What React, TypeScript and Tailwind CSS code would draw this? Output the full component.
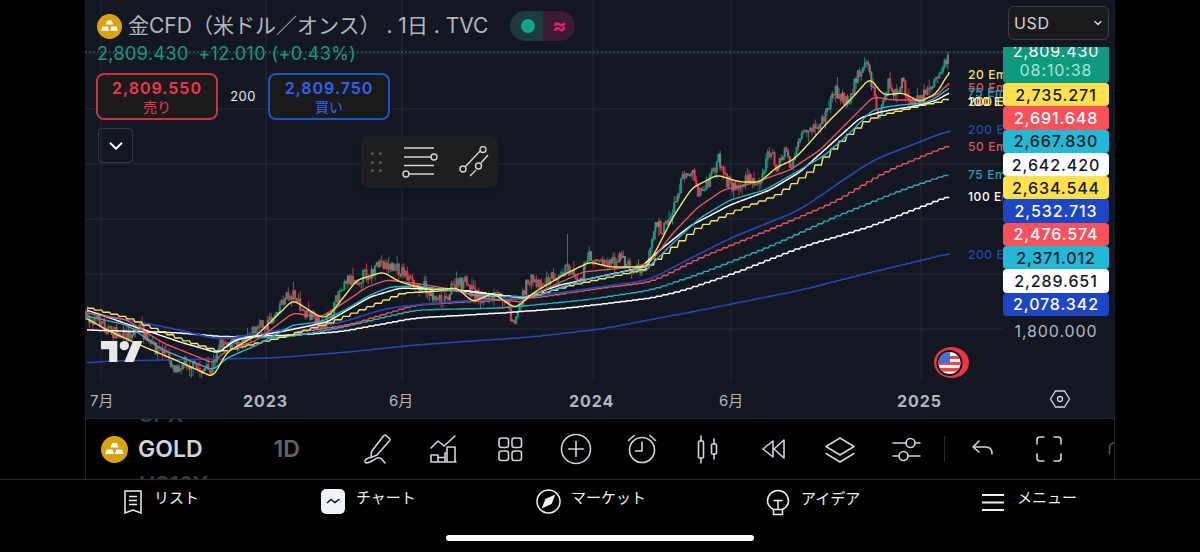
import { ChevronDown } from "lucide-react"

type Pt = [number, number]

// chart curves are kept in page pixels, the svg viewBox starts at the panel edge
const pricePts: Pt[] = [[86,318],[100,320],[110,332],[125,337],[140,326],[150,345],[165,352],[175,368],[185,360],[195,368],[212,372],[218,345],[226,340],[235,345],[245,335],[258,328],[270,322],[282,300],[295,293],[300,310],[312,318],[322,325],[332,315],[338,295],[345,278],[355,280],[365,275],[375,272],[380,262],[392,268],[405,272],[412,285],[422,285],[432,295],[445,298],[455,285],[465,283],[475,295],[490,298],[505,295],[512,318],[516,320],[522,295],[530,280],[545,283],[560,270],[570,270],[580,278],[590,255],[600,263],[620,258],[633,270],[647,265],[652,240],[655,223],[663,230],[673,210],[685,170],[693,173],[697,192],[707,187],[718,158],[723,178],[737,188],[748,180],[757,185],[770,150],[777,167],[787,150],[790,168],[800,140],[813,130],[823,120],[835,90],[847,103],[860,70],[866,63],[870,73],[875,100],[879,120],[885,97],[888,83],[893,97],[903,83],[910,107],[920,100],[927,90],[937,77],[949,55]]

const yellow20: Pt[] = [[86,318],[107,330],[140,345],[180,362],[213,377],[227,352],[257,335],[293,300],[320,317],[328,317],[357,280],[383,272],[400,282],[430,290],[457,288],[473,302],[493,293],[513,307],[517,307],[533,293],[567,273],[590,262],[610,267],[647,267],[660,243],[673,217],[692,188],[717,175],[740,182],[760,182],[777,167],[793,160],[803,150],[827,123],[853,97],[870,78],[877,87],[883,95],[903,93],[920,102],[937,93],[949,72]]
const red50: Pt[] = [[87,313],[127,320],[163,343],[213,363],[223,353],[257,340],[293,313],[320,317],[333,310],[367,287],[387,280],[413,283],[457,290],[480,298],[523,302],[533,295],[583,272],[633,267],[650,263],[673,233],[697,208],[723,190],[753,183],[790,170],[820,150],[850,120],[873,97],[893,100],[920,100],[937,95],[949,83]]
const cyan75: Pt[] = [[87,316],[127,325],[163,350],[213,370],[227,358],[257,345],[293,325],[320,322],[345,310],[370,295],[390,287],[415,286],[457,291],[480,296],[533,297],[583,280],[633,270],[650,266],[673,243],[700,218],[730,200],[765,190],[800,170],[825,155],[850,133],[870,112],[880,108],[900,105],[925,103],[937,97],[949,88]]
const white100: Pt[] = [[87,310],[130,325],[180,342],[218,353],[235,340],[290,330],[327,322],[370,297],[400,288],[457,290],[523,298],[560,285],[640,268],[660,250],[690,226],[730,205],[770,190],[800,172],[830,145],[860,118],[880,112],[920,105],[937,100],[949,93]]
const yellow200: Pt[] = [[87,308],[125,318],[180,340],[218,352],[280,337],[327,323],[400,293],[457,290],[523,298],[570,285],[640,270],[665,252],[695,228],[735,210],[775,195],[810,170],[840,140],[865,120],[880,115],[920,105],[937,102],[949,97]]

const blue200: Pt[] = [[87,312],[180,330],[220,340],[280,330],[340,323],[387,308],[447,302],[523,298],[600,287],[650,280],[683,262],[733,237],[800,210],[833,187],[873,160],[917,143],[950,130]]
const red200: Pt[] = [[297,332],[347,325],[413,305],[480,301],[533,298],[600,288],[650,282],[700,257],[767,230],[833,202],[883,172],[950,144]]
const cyan200: Pt[] = [[230,338],[287,337],[337,328],[413,310],[500,308],[583,300],[650,290],[700,273],[767,247],[833,217],[900,190],[950,173]]
const white200: Pt[] = [[87,330],[180,333],[223,337],[293,335],[337,332],[413,318],[500,313],[567,308],[650,298],[683,290],[733,273],[800,247],[867,227],[950,195]]
const blueLong: Pt[] = [[87,363],[107,361],[270,358],[347,352],[413,345],[530,337],[600,329],[700,310],[800,290],[867,273],[950,253]]

function yAt(pts: Pt[], x: number) {
  if (x <= pts[0][0]) return pts[0][1]
  for (let i = 1; i < pts.length; i++) {
    if (x <= pts[i][0]) {
      const [x0, y0] = pts[i - 1]
      const [x1, y1] = pts[i]
      return y0 + ((y1 - y0) * (x - x0)) / (x1 - x0)
    }
  }
  return pts[pts.length - 1][1]
}

function smoothAt(pts: Pt[], x: number, win: number) {
  const end = pts[pts.length - 1][0]
  let sum = 0
  let n = 0
  for (let d = -win; d <= win; d += 2) {
    sum += yAt(pts, Math.min(x + d, end))
    n++
  }
  return sum / n
}

function smoothLine(pts: Pt[], win = 4) {
  const out: string[] = []
  const end = pts[pts.length - 1][0]
  for (let x = pts[0][0]; x < end; x += 1.5) out.push(`${x},${smoothAt(pts, x, win).toFixed(1)}`)
  out.push(`${end},${pts[pts.length - 1][1]}`)
  return out.join(" ")
}

// higher timeframe EMAs come out as a staircase
function stairLine(pts: Pt[], step: number, win = 14) {
  const out: string[] = []
  const end = pts[pts.length - 1][0]
  for (let x = pts[0][0]; x < end; x += step) {
    const y = smoothAt(pts, x, win).toFixed(1)
    out.push(`${x},${y}`, `${Math.min(x + step - 1.6, end)},${y}`)
  }
  return out.join(" ")
}

function buildCandles() {
  let seed = 7
  const rnd = () => {
    seed = (seed * 16807) % 2147483647
    return seed / 2147483647
  }
  const paths = { green: "", red: "", grey: "" }
  let prev = pricePts[0][1]
  for (let x = 86; x < 949; x += 1.7) {
    const c = yAt(pricePts, x) + (rnd() - 0.5) * 13
    const top = Math.min(c, prev) - rnd() * rnd() * 10
    const bottom = Math.max(c, prev) + rnd() * rnd() * 10
    const r = rnd()
    const key = r < 0.2 ? "grey" : c < prev ? "green" : "red"
    const bodyTop = Math.min(c, prev)
    const bodyH = Math.max(Math.abs(c - prev), 1)
    paths[key] += `M${x.toFixed(1)} ${top.toFixed(1)}V${bottom.toFixed(1)}M${(x - 0.6).toFixed(1)} ${bodyTop.toFixed(1)}h1.2v${bodyH.toFixed(1)}h-1.2z`
    prev = c
  }
  paths.red += "M567.5 234V272"
  return paths
}

const candles = buildCandles()

const emaLabels = [
  { text: "20 Ema", y: 79, cls: "fill-[#f5e663]" },
  { text: "50 Ema", y: 92, cls: "fill-[#d9575b]" },
  { text: "75 Ema", y: 97, cls: "fill-[#2a9fb5]" },
  { text: "100 Ema", y: 106, cls: "fill-[#ffffff]" },
  { text: "200 Ema", y: 106, cls: "fill-[#f5e663]" },
  { text: "200 Ema", y: 134, cls: "fill-[#2447b3]" },
  { text: "50 Ema", y: 151, cls: "fill-[#d9575b]" },
  { text: "75 Ema", y: 179, cls: "fill-[#2a9fb5]" },
  { text: "100 Ema", y: 201, cls: "fill-[#ffffff]" },
  { text: "200 Ema", y: 259, cls: "fill-[#2447b3]" },
]

const priceTags = [
  { value: "2,735.271", cls: "bg-[#ffe14d] text-[#131722]" },
  { value: "2,691.648", cls: "bg-[#f9525a] text-white" },
  { value: "2,667.830", cls: "bg-[#22b8d6] text-[#131722]" },
  { value: "2,642.420", cls: "bg-white text-[#131722]" },
  { value: "2,634.544", cls: "bg-[#ffe14d] text-[#131722]" },
  { value: "2,532.713", cls: "bg-[#1d45c4] text-white" },
  { value: "2,476.574", cls: "bg-[#f9525a] text-white" },
  { value: "2,371.012", cls: "bg-[#22b8d6] text-[#131722]" },
  { value: "2,289.651", cls: "bg-white text-[#131722]" },
  { value: "2,078.342", cls: "bg-[#1d45c4] text-white" },
]

function GoldIcon({ size }: { size: number }) {
  return (
    <svg width={size} height={size} viewBox="0 0 26 26" className="shrink-0">
      <circle cx="13" cy="13" r="13" fill="#dca20c" />
      <path d="M10.6 6.8h4.8l1.4 4.2H9.2zM5.6 13h5.6l1.3 4.4H4.3zM14.8 13h5.6l1.3 4.4h-8.2z" fill="#fff" />
    </svg>
  )
}

function ChartCanvas() {
  const gridX = [101, 266, 402, 593, 731, 921]
  const gridY = [54, 109, 164, 219, 274, 329]
  return (
    <svg viewBox="85 0 918 381" width="918" height="381" className="block">
      {gridX.map((x) => <line key={x} x1={x} x2={x} y1="0" y2="381" stroke="#262a36" strokeWidth="1" />)}
      {gridY.map((y) => <line key={y} x1="85" x2="1003" y1={y} y2={y} stroke="#262a36" strokeWidth="1" />)}
      <path d={candles.green} stroke="#1b9d84" fill="#1b9d84" strokeWidth="0.8" />
      <path d={candles.red} stroke="#ee3a4a" fill="#ee3a4a" strokeWidth="0.8" />
      <path d={candles.grey} stroke="#857f7c" fill="#857f7c" strokeWidth="0.8" />
      <g fill="none" strokeLinejoin="round">
        <polyline points={stairLine(blueLong, 5)} stroke="#2447b3" strokeWidth="1.5" />
        <polyline points={stairLine(white200, 6)} stroke="#ffffff" strokeWidth="1.5" />
        <polyline points={stairLine(cyan200, 6)} stroke="#2aa9b8" strokeWidth="1.4" />
        <polyline points={stairLine(red200, 6)} stroke="#e3565a" strokeWidth="1.4" />
        <polyline points={smoothLine(blue200, 14)} stroke="#2447b3" strokeWidth="1.7" />
        <polyline points={stairLine(yellow200, 8, 4)} stroke="#f5e663" strokeWidth="1.4" />
        <polyline points={smoothLine(white100)} stroke="#ffffff" strokeWidth="1.5" />
        <polyline points={smoothLine(cyan75)} stroke="#2ab4cf" strokeWidth="1.4" />
        <polyline points={smoothLine(red50)} stroke="#e3565a" strokeWidth="1.4" />
        <polyline points={smoothLine(yellow20)} stroke="#f5e663" strokeWidth="1.4" />
      </g>
      <line x1="85" x2="1003" y1="52" y2="52" stroke="#1f9d85" strokeWidth="1" strokeDasharray="1.5 2.5" />
      {emaLabels.map((l, i) => (
        <text key={i} x="968" y={l.y} fontSize="12" letterSpacing="0.6" fontWeight="500" className={l.cls}>{l.text}</text>
      ))}
      {/* tv logo */}
      <svg x="101" y="341" width="42" height="21" viewBox="0 4 36 18">
        <path d="M14 22H7V11H0V4h14v18zM28 22h-8l7.5-18h8L28 22z" fill="#e9e9ea" />
        <circle cx="20" cy="8" r="4" fill="#e9e9ea" />
      </svg>
      {/* flag */}
      <ellipse cx="951.5" cy="362.5" rx="17.5" ry="15.5" fill="#ef3340" />
      <circle cx="949.5" cy="363" r="13" fill="#131722" />
      <clipPath id="flagClip"><circle cx="949.5" cy="363" r="11" /></clipPath>
      <g clipPath="url(#flagClip)">
        <rect x="938" y="352" width="24" height="22" fill="#f7f7f7" />
        <rect x="938" y="356" width="24" height="3" fill="#e8474f" />
        <rect x="938" y="362" width="24" height="3" fill="#e8474f" />
        <rect x="938" y="368" width="24" height="3.5" fill="#e8474f" />
        <rect x="938" y="351" width="12" height="12" fill="#3f6fd1" />
      </g>
    </svg>
  )
}

function ToolIcon({ children }: { children: React.ReactNode }) {
  return (
    <div className="w-[66px] flex justify-center shrink-0">
      <svg width="32" height="32" viewBox="0 0 32 32" fill="none" stroke="#d1d4dc" strokeWidth="1.6" strokeLinecap="round" strokeLinejoin="round">
        {children}
      </svg>
    </div>
  )
}

function Toolbar() {
  return (
    <div className="relative h-[60px] flex items-center overflow-hidden border-x border-[#1e222d]">
      <div className="absolute left-[53px] top-[-17px] h-[94px] flex flex-col justify-between text-[22px] font-semibold leading-[24px] text-[#3a3c40]">
        <span>SPX</span>
        <span>US10Y</span>
      </div>
      <div className="w-[259px] shrink-0 pl-[15px] flex items-center bg-black py-[10px] relative">
        <GoldIcon size={27} />
        <span className="ml-[10px] text-[23px] font-semibold text-[#d1d4dc] leading-none">GOLD</span>
        <span className="ml-[71px] text-[23px] font-semibold text-[#62646c] leading-none">1D</span>
      </div>
      <ToolIcon>
        <path d="M24 2.500l3.500 2.800c.8.8.6 1.700 0 2.500L15 22l-6 2.500.5-6L21.500 3c.7-.8 1.700-.9 2.500-.5zM9.500 24c-4 1-7 3-6.500 5 .5 1.500 4 1 7-1 3-2 5-4 8-3 2 .6 3 3 5 5" />
      </ToolIcon>
      <ToolIcon>
        <path d="M3 15l7-7 6 5L27 3M3 29v-7h7v7zM10 29v-4.500h7V29zM3 29h25M19 29V14h8v15zM17 29v-9h2" />
      </ToolIcon>
      <ToolIcon>
        <rect x="5" y="5" width="9.500" height="9.500" rx="2.500" /><rect x="18" y="5" width="9.500" height="9.500" rx="2.500" />
        <rect x="5" y="18" width="9.500" height="9.500" rx="2.500" /><rect x="18" y="18" width="9.500" height="9.500" rx="2.500" />
      </ToolIcon>
      <ToolIcon>
        <circle cx="16" cy="16" r="14.500" /><path d="M16 8.500v15M8.500 16h15" />
      </ToolIcon>
      <ToolIcon>
        <circle cx="16" cy="17" r="12.500" /><path d="M16 9v9H9.500M2.500 7.500L8 2.500M29.500 7.500L24 2.500" />
      </ToolIcon>
      <ToolIcon>
        <rect x="6.500" y="8" width="5" height="17" rx="1" /><path d="M9 3v5M9 25v5" />
        <rect x="19.500" y="11" width="5" height="10" rx="1" /><path d="M22 6v5M22 21v5" />
      </ToolIcon>
      <ToolIcon>
        <path d="M15 8L5 16l10 8zM26 7l-10 9 10 9z" />
      </ToolIcon>
      <ToolIcon>
        <path d="M16 5l14 8.500-14 8.500-14-8.500zM2 20.500L16 29l14-8.500" />
      </ToolIcon>
      <ToolIcon>
        <path d="M3 10h13M25 10h5M3 23h6M18 23h12" /><circle cx="20.500" cy="10" r="4.500" /><circle cx="13.500" cy="23" r="4.500" />
      </ToolIcon>
      <div className="w-px h-[26px] bg-[#2a2b2f] ml-[5px] shrink-0" />
      <div className="ml-[5px] flex">
        <ToolIcon>
          <path d="M12 8l-6 6 6 5M6.500 14H19c3.500 0 6 2.500 6 7" />
        </ToolIcon>
        <ToolIcon>
          <path d="M4 11V7c0-2 1-3 3-3h4M21 4h4c2 0 3 1 3 3v4M28 21v4c0 2-1 3-3 3h-4M11 28H7c-2 0-3-1-3-3v-4" />
        </ToolIcon>
      </div>
      <svg width="8" height="14" viewBox="0 0 8 14" fill="none" stroke="#55575e" strokeWidth="1.5" className="absolute left-[1022px] top-[22px]">
        <path d="M1.500 13V7c0-2.500 2-5 6-5.500" />
      </svg>
    </div>
  )
}

function TabBar() {
  const label = "text-[15px] text-[#f0f0f0] leading-none mt-[-9px] whitespace-nowrap"
  return (
    <div className="h-[73px] border-t border-[#2a2a2c] pt-[9px] relative">
      <div className="flex items-start gap-[121px] pl-[122px]">
        <div className="flex items-center gap-[10px] w-[78px]">
          <svg width="22" height="26" viewBox="0 0 22 26" fill="none" stroke="#f0f0f0" strokeWidth="1.500" className="shrink-0">
            <path d="M3 2h16v22l-8-3-8 3zM7 7.500h8M7 11.500h8M7 15.500h8" />
          </svg>
          <span className={label}>リスト</span>
        </div>
        <div className="flex items-center gap-[11px] w-[94px]">
          <svg width="24" height="25" viewBox="0 0 24 25" className="shrink-0">
            <rect width="24" height="25" rx="5" fill="#f0f3fa" />
            <path d="M6 14l4-3.500 4 3 4.500-3.500" fill="none" stroke="#131722" strokeWidth="1.500" />
          </svg>
          <span className={label}>チャート</span>
        </div>
        <div className="flex items-center gap-[10px] w-[109px]">
          <svg width="25" height="25" viewBox="0 0 25 25" fill="none" stroke="#f0f0f0" strokeWidth="1.500" className="shrink-0">
            <circle cx="12.500" cy="12.500" r="11.500" />
            <path d="M18 7l-8 3.500-3 7.500 8-3.500z" fill="#f0f0f0" />
          </svg>
          <span className={label}>マーケット</span>
        </div>
        <div className="flex items-center gap-[11px] w-[95px]">
          <svg width="24" height="27" viewBox="0 0 24 27" fill="none" stroke="#f0f0f0" strokeWidth="1.500" className="shrink-0">
            <path d="M7.500 20.500C4 18.500 1.500 15.500 1.500 12a10.500 10.500 0 0121 0c0 3.500-2.500 6.500-6 8.500zM7.500 11.500h9M12 11.500v9M7.500 20.500h9v5h-9z" />
          </svg>
          <span className={label}>アイデア</span>
        </div>
        <div className="flex items-center gap-[13px] w-[95px]">
          <svg width="22" height="26" viewBox="0 0 22 26" stroke="#f0f0f0" strokeWidth="2" className="shrink-0">
            <path d="M0 6h22M0 13.500h22M0 21h22" />
          </svg>
          <span className={label}>メニュー</span>
        </div>
      </div>
      <div className="absolute left-[446px] bottom-[11px] w-[308px] h-[6px] rounded-full bg-white" />
    </div>
  )
}

export default function App() {
  return (
    <div className="w-[1200px] h-[552px] bg-black overflow-hidden font-['Inter','Noto_Sans_CJK_JP',sans-serif]">
      <div className="ml-[85px] w-[1030px] h-[419px] bg-[#131722] border-b border-[#1e2433] flex relative">
        <div className="w-[918px] shrink-0 flex flex-col">
          <ChartCanvas />
          <div className="relative h-[37px] text-[15px] text-[#b2b5be]">
            <span className="absolute left-[5px] top-[9px]">7月</span>
            <span className="absolute left-[158px] top-[8px] font-bold text-[16px] tracking-[0.9px]">2023</span>
            <span className="absolute left-[304px] top-[9px]">6月</span>
            <span className="absolute left-[484px] top-[8px] font-bold text-[16px] tracking-[0.9px]">2024</span>
            <span className="absolute left-[634px] top-[9px]">6月</span>
            <span className="absolute left-[812px] top-[8px] font-bold text-[16px] tracking-[0.9px]">2025</span>
          </div>
        </div>
        <div className="w-[112px] shrink-0 flex flex-col pr-[6px]">
          <div className="mt-[6px] ml-[5px] h-[34px] bg-[#1a1a1c] border border-[#3c3d42] rounded-md flex items-center justify-between pl-[5px] pr-[4px] text-[16px] tracking-[0.7px] text-[#d1d4dc]">
            <span>USD</span>
            <ChevronDown size={12} strokeWidth={3} />
          </div>
          <div className="mt-[7px] h-[36px] bg-[#0f9a80] overflow-hidden rounded-b-sm flex flex-col items-center pb-[2px] text-[16px] tracking-[0.9px] leading-[19px] text-white">
            <span className="mt-[-5px]">2,809.430</span>
            <span className="text-[#a8e3d6]">08:10:38</span>
          </div>
          {priceTags.map((t) => (
            <div key={t.value} className={`h-[23.300px] rounded-sm flex items-center justify-center text-[16px] font-medium tracking-[0.9px] ${t.cls}`}>
              {t.value}
            </div>
          ))}
          <div className="mt-[3px] text-center text-[16px] tracking-[0.9px] text-[#b2b5be]">1,800.000</div>
          <div className="flex-1 flex items-end justify-center pb-[8px] ml-[8px]">
            <svg width="22" height="22" viewBox="0 0 22 22" fill="none" stroke="#d1d4dc" strokeWidth="1.300">
              <path d="M6.500 3h9L20.500 11l-5 8h-9L1.500 11z" />
              <circle cx="11" cy="11" r="2.500" />
            </svg>
          </div>
        </div>

        {/* overlays on top of the chart */}
        <div className="absolute left-[12px] top-[11px] flex items-center">
          <GoldIcon size={25} />
          <span className="ml-[6px] text-[21px] text-[#b2b5be] leading-[26px] whitespace-nowrap">金CFD（米ドル／オンス）&nbsp;. 1日 . TVC</span>
          <div className="ml-[22px] flex h-[30px] w-[65px] rounded-full overflow-hidden">
            <div className="w-[33px] bg-[#1d3a3c] flex items-center justify-center pl-[2px]">
              <div className="w-[14px] h-[14px] rounded-full bg-[#10a58a]" />
            </div>
            <div className="flex-1 bg-[#3d1a33] flex items-center justify-center text-[21px] font-bold text-[#e91e72]">≈</div>
          </div>
        </div>
        <div className="absolute left-[12px] top-[44px] text-[18px] text-[#129a81] tracking-[0.4px] leading-[20px] whitespace-nowrap">
          2,809.430 <span className="ml-[4px]">+12.010 (+0.43%)</span>
        </div>
        <div className="absolute left-[11px] top-[73px] flex items-center">
          <div className="w-[122px] h-[47px] rounded-lg border-2 border-[#c9323f] bg-[#1a1a1c] flex flex-col items-center justify-center text-[#f23645]">
            <span className="text-[16px] font-semibold tracking-[1px] leading-[20px]">2,809.550</span>
            <span className="text-[14px] leading-[17px]">売り</span>
          </div>
          <span className="w-[50px] text-center text-[13px] text-[#e8e8e8] tracking-[0.4px]">200</span>
          <div className="w-[122px] h-[47px] rounded-lg border-2 border-[#2450c8] bg-[#1a1a1c] flex flex-col items-center justify-center text-[#2f62f5]">
            <span className="text-[16px] font-semibold tracking-[1px] leading-[20px]">2,809.750</span>
            <span className="text-[14px] leading-[17px]">買い</span>
          </div>
        </div>
        <div className="absolute left-[13px] top-[128px] w-[35px] h-[35px] rounded border border-[#34363d] flex items-center justify-center text-white">
          <ChevronDown size={22} strokeWidth={2} />
        </div>
        <div className="absolute left-[276px] top-[136px] w-[137px] h-[52px] bg-[#1e1e1f] rounded-lg flex items-center pl-[10px] shadow-md">
          <div className="grid grid-cols-2 gap-x-[5px] gap-y-[5.500px]">
            {[0, 1, 2, 3, 4, 5].map((i) => <div key={i} className="w-[3px] h-[3px] rounded-full bg-[#55565a]" />)}
          </div>
          <svg width="36" height="32" viewBox="0 0 36 32" fill="none" stroke="#d1d4dc" strokeWidth="1.400" className="ml-[20px]">
            <path d="M2 2h30M2 11h27M2 19.500h30M7 28h25" />
            <circle cx="32" cy="11" r="3" /><circle cx="4" cy="28" r="3" />
          </svg>
          <svg width="32" height="32" viewBox="0 0 32 32" fill="none" stroke="#d1d4dc" strokeWidth="1.400" className="ml-[21px]">
            <path d="M6 21L21 5M11 30l6-6M22 17l7-8" />
            <circle cx="24" cy="3.500" r="3" /><circle cx="4" cy="23" r="3" /><circle cx="19.500" cy="20" r="3" />
          </svg>
        </div>
      </div>
      <div className="ml-[85px] w-[1030px]">
        <Toolbar />
      </div>
      <TabBar />
    </div>
  )
}
